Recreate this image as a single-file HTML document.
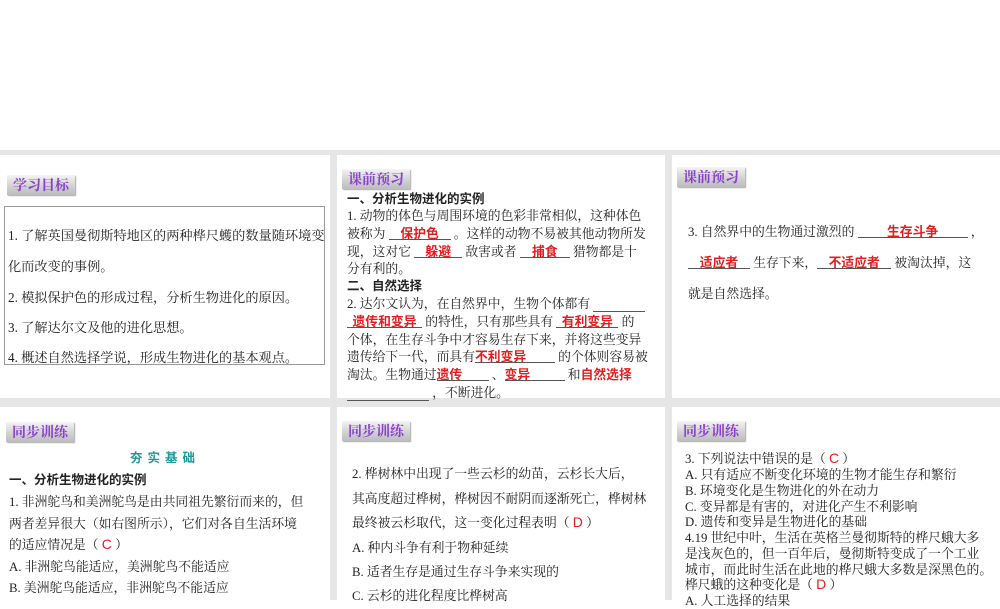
<!DOCTYPE html>
<html><head><meta charset="utf-8"><style>
body{margin:0;width:1000px;height:600px;overflow:hidden;background:#fff;font-family:"Liberation Serif","Noto Serif CJK SC",serif;position:relative}
.bg{position:absolute;left:0;top:150px;width:1000px;height:450px;background:#e6e6e6}
.p{position:absolute;background:#fff}
.tab{position:absolute;height:20px;background:linear-gradient(#f4f4f4,#cfcfcf 60%,#bdbdbd);color:#8a3fd0;font-weight:bold;font-size:14px;line-height:20px;padding:0 6px;font-family:"Noto Serif CJK SC",serif;box-shadow:1px 1px 1px #aaa}
.t{position:absolute;font-size:12.8px;color:#222;white-space:nowrap}
.b{font-weight:bold;font-family:"Noto Sans CJK SC",sans-serif;font-size:12.5px}
.r{color:#e02020;font-weight:bold;font-family:"Noto Sans CJK SC",sans-serif}
.u{display:inline-block;border-bottom:1px solid #555;text-align:center;line-height:13px}
</style></head><body>
<div class="bg"></div>
<div class="p" style="left:0;top:155px;width:330px;height:243px"></div>
<div class="p" style="left:337px;top:155px;width:328px;height:243px"></div>
<div class="p" style="left:672px;top:155px;width:328px;height:243px"></div>
<div class="p" style="left:0;top:407px;width:330px;height:193px"></div>
<div class="p" style="left:337px;top:407px;width:328px;height:193px"></div>
<div class="p" style="left:672px;top:407px;width:328px;height:193px"></div>

<div class="tab" style="left:7px;top:175px">学习目标</div>
<div style="position:absolute;left:4px;top:206px;width:319px;height:157px;border:1px solid #999"></div>
<div class="t" style="left:8px;top:225px;font-size:13.2px">1. 了解英国曼彻斯特地区的两种桦尺蠖的数量随环境变</div>
<div class="t" style="left:8px;top:256px;font-size:13.2px">化而改变的事例。</div>
<div class="t" style="left:8px;top:287px;font-size:13.2px">2. 模拟保护色的形成过程，分析生物进化的原因。</div>
<div class="t" style="left:8px;top:317px;font-size:13.2px">3. 了解达尔文及他的进化思想。</div>
<div class="t" style="left:8px;top:347px;font-size:13.2px">4. 概述自然选择学说，形成生物进化的基本观点。</div>

<div class="tab" style="left:342px;top:169px">课前预习</div>
<div class="t b" style="left:347px;top:188px">一、分析生物进化的实例</div>
<div class="t" style="left:347px;top:205px">1. 动物的体色与周围环境的色彩非常相似，这种体色</div>
<div class="t" style="left:347px;top:223px">被称为 <span class="u r" style="width:62px">保护色</span> 。这样的动物不易被其他动物所发</div>
<div class="t" style="left:347px;top:241px">现，这对它 <span class="u r" style="width:48px">躲避</span> 敌害或者 <span class="u r" style="width:50px">捕食</span> 猎物都是十</div>
<div class="t" style="left:347px;top:258px">分有利的。</div>
<div class="t b" style="left:347px;top:275px">二、自然选择</div>
<div class="t" style="left:347px;top:293px">2. 达尔文认为，在自然界中，生物个体都有 <span class="u" style="width:52px">&nbsp;</span></div>
<div class="t" style="left:347px;top:311px"><span class="u r" style="width:75px">遗传和变异</span> 的特性，只有那些具有 <span class="u r" style="width:62px">有利变异</span> 的</div>
<div class="t" style="left:347px;top:329px">个体，在生存斗争中才容易生存下来，并将这些变异</div>
<div class="t" style="left:347px;top:346px">遗传给下一代，而具有<span class="u r" style="width:80px;text-align:left">不利变异</span> 的个体则容易被</div>
<div class="t" style="left:347px;top:364px">淘汰。生物通过<span class="u r" style="width:52px;text-align:left">遗传</span> 、<span class="u r" style="width:60px;text-align:left">变异</span> 和<span class="r">自然选择</span></div>
<div class="t" style="left:347px;top:382px"><span class="u" style="width:82px">&nbsp;</span> ，不断进化。</div>

<div class="tab" style="left:677px;top:167px">课前预习</div>
<div class="t" style="left:688px;top:221px">3. 自然界中的生物通过激烈的 <span class="u r" style="width:110px">生存斗争</span> ，</div>
<div class="t" style="left:688px;top:252px"><span class="u r" style="width:62px">适应者</span> 生存下来，<span class="u r" style="width:74px">不适应者</span> 被淘汰掉，这</div>
<div class="t" style="left:688px;top:283px">就是自然选择。</div>

<div class="tab" style="left:6px;top:422px">同步训练</div>
<div class="t b" style="left:130px;top:447px;color:#1a9a9a;letter-spacing:5px">夯实基础</div>
<div class="t b" style="left:9px;top:469px">一、分析生物进化的实例</div>
<div class="t" style="left:9px;top:491px">1. 非洲鸵鸟和美洲鸵鸟是由共同祖先繁衍而来的，但</div>
<div class="t" style="left:9px;top:513px">两者差异很大（如右图所示），它们对各自生活环境</div>
<div class="t" style="left:9px;top:534px">的适应情况是（ <span style="color:#e02020;font-family:'Liberation Sans';font-size:14px">C</span> ）</div>
<div class="t" style="left:9px;top:556px">A. 非洲鸵鸟能适应，美洲鸵鸟不能适应</div>
<div class="t" style="left:9px;top:577px">B. 美洲鸵鸟能适应，非洲鸵鸟不能适应</div>

<div class="tab" style="left:342px;top:421px">同步训练</div>
<div class="t" style="left:352px;top:463px">2. 桦树林中出现了一些云杉的幼苗，云杉长大后，</div>
<div class="t" style="left:352px;top:488px">其高度超过桦树，桦树因不耐阴而逐渐死亡，桦树林</div>
<div class="t" style="left:352px;top:512px">最终被云杉取代，这一变化过程表明（ <span style="color:#e02020;font-family:'Liberation Sans';font-size:14px">D</span> ）</div>
<div class="t" style="left:352px;top:537px">A. 种内斗争有利于物种延续</div>
<div class="t" style="left:352px;top:561px">B. 适者生存是通过生存斗争来实现的</div>
<div class="t" style="left:352px;top:585px">C. 云杉的进化程度比桦树高</div>

<div class="tab" style="left:677px;top:421px">同步训练</div>
<div class="t" style="left:685px;top:448px">3. 下列说法中错误的是（ <span style="color:#e02020;font-family:'Liberation Sans';font-size:14px">C</span> ）</div>
<div class="t" style="left:685px;top:464px">A. 只有适应不断变化环境的生物才能生存和繁衍</div>
<div class="t" style="left:685px;top:480px">B. 环境变化是生物进化的外在动力</div>
<div class="t" style="left:685px;top:496px">C. 变异都是有害的，对进化产生不利影响</div>
<div class="t" style="left:685px;top:511px">D. 遗传和变异是生物进化的基础</div>
<div class="t" style="left:685px;top:527px">4.19 世纪中叶，生活在英格兰曼彻斯特的桦尺蛾大多</div>
<div class="t" style="left:685px;top:543px">是浅灰色的，但一百年后，曼彻斯特变成了一个工业</div>
<div class="t" style="left:685px;top:559px">城市，而此时生活在此地的桦尺蛾大多数是深黑色的。</div>
<div class="t" style="left:685px;top:574px">桦尺蛾的这种变化是（ <span style="color:#e02020;font-family:'Liberation Sans';font-size:14px">D</span> ）</div>
<div class="t" style="left:685px;top:590px">A. 人工选择的结果</div>
</body></html>
